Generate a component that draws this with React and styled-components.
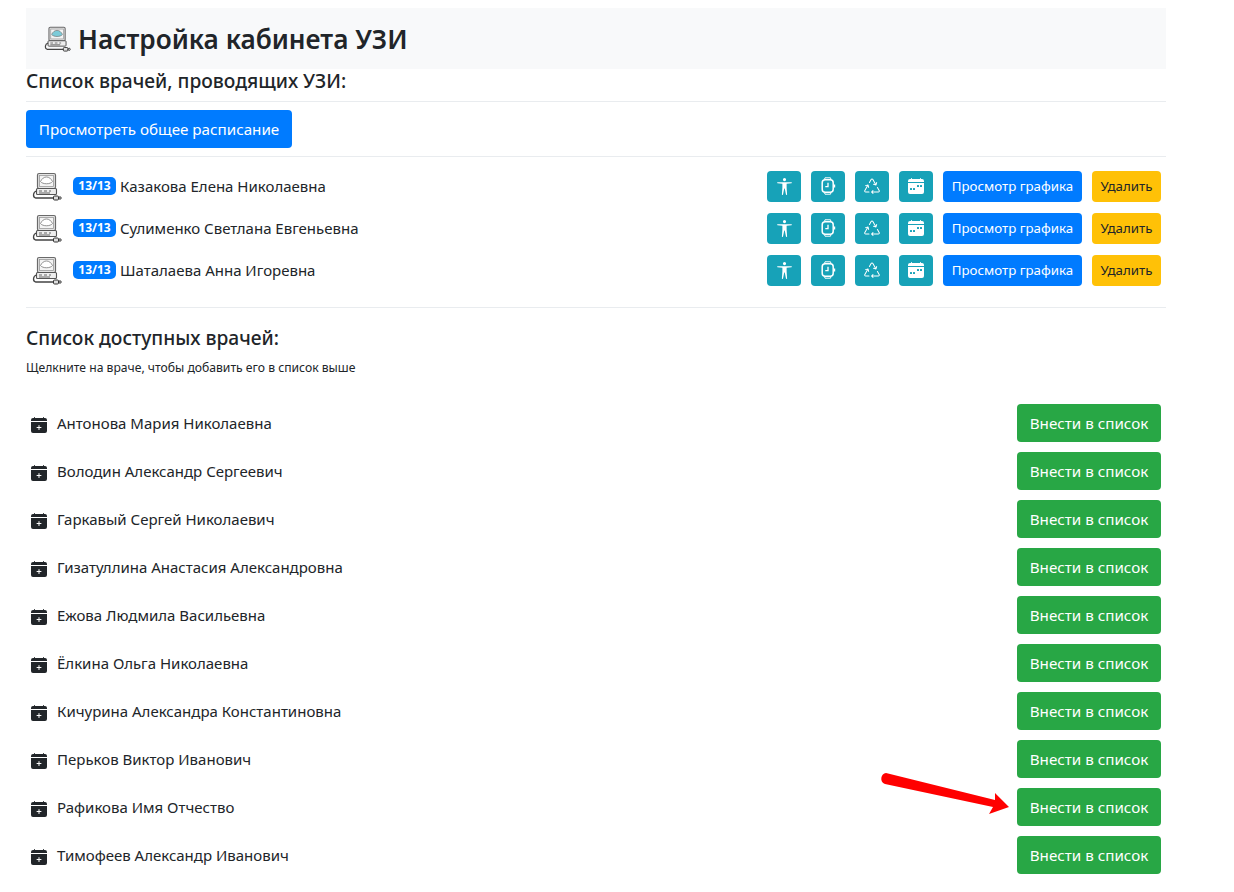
import React from "react";
import styled, { createGlobalStyle } from "styled-components";
import {
  BsUniversalAccess,
  BsRecycle,
  BsCalendarWeekFill,
  BsCalendarPlusFill,
} from "react-icons/bs";

const Global = createGlobalStyle`
  html, body { margin: 0; padding: 0; background: #fff; }
  body { font-family: "Noto Sans", "Open Sans", sans-serif; font-size: 15px; line-height: 24px; color: #212529; }
  * { box-sizing: border-box; }
`;

const Page = styled.div`
  position: relative;
  width: 1234px;
  height: 892px;
  overflow: hidden;
  padding: 8px 0 0 26px;
`;
const Container = styled.div`
  width: 1140px;
`;
const Banner = styled.header`
  height: 61px;
  background: #f8f9fa;
  display: flex;
  align-items: center;
  padding-left: 18px;
  gap: 7px;
`;
const Title = styled.h1`
  margin: 0;
  font-size: 26.2px;
  font-weight: 600;
  line-height: 36px;
`;
const SubTitle = styled.h2`
  margin: 0;
  padding-bottom: 3px;
  font-size: 19.2px;
  font-weight: 500;
  line-height: 24px;
`;
const Rule = styled.hr`
  margin: ${(p) => p.$m || "0"};
  border: 0;
  border-top: 1px solid #e9ecef;
`;
const Button = styled.button`
  border: 0;
  font-family: inherit;
  color: #fff;
  background: ${(p) => p.$bg || "#007bff"};
  border-radius: 4px;
  padding: 0;
  display: inline-flex;
  align-items: center;
  justify-content: center;
`;
const MainButton = styled(Button)`
  display: flex;
  width: 266px;
  height: 38px;
  font-size: 15.2px;
`;
const DoctorRow = styled.div`
  height: 42px;
  display: flex;
  align-items: center;
  padding: 0 5px 0 6px;
`;
const DoctorRows = styled.div`
  padding-top: 8px;
  padding-bottom: 16px;
`;
const Badge = styled.span`
  width: 43px;
  height: 18px;
  margin: 0 4px 0 11px;
  border-radius: 5px;
  background: #007bff;
  color: #fff;
  font-size: 12px;
  font-weight: 700;
  line-height: 18px;
  text-align: center;
`;
const Name = styled.span`
  font-size: 15px;
  color: #212529;
`;
const Spacer = styled.div`
  flex: 1;
`;
const Actions = styled.div`
  display: flex;
  align-items: center;
  gap: 10px;
`;
const IconButton = styled(Button)`
  width: 34px;
  height: 31px;
  background: #17a2b8;
  font-size: ${(p) => p.$s || 16}px;
`;
const SmallButton = styled(Button)`
  height: 31px;
  font-size: 13.3px;
  width: ${(p) => p.$w}px;
  color: ${(p) => p.$fg || "#fff"};
`;
const Hint = styled.p`
  margin: 6px 0 0;
  font-size: 12.16px;
  line-height: 18px;
`;
const Available = styled.div`
  padding-top: 18px;
`;
const AvailableList = styled.div`
  margin-top: 27px;
  display: flex;
  flex-direction: column;
  gap: 10px;
`;
const AvailableRow = styled.div`
  height: 38px;
  display: flex;
  align-items: center;
  padding: 0 5px;
  color: #212529;
`;
const RowIcon = styled(BsCalendarPlusFill)`
  font-size: 16px;
  margin-right: 10px;
  position: relative;
  top: 2px;
`;
const AddButton = styled(Button)`
  width: 144px;
  height: 38px;
  background: #28a745;
  font-size: 15.2px;
`;
const Arrow = styled.svg`
  position: absolute;
  left: 876px;
  top: 766px;
`;

function Computer({ size = 30, screen = "#fff" }) {
  return (
    <svg width={size} height={size} viewBox="0 0 30 30" fill="none">
      <rect x="5.500" y="2.500" width="18" height="15" rx="1.500" fill="#e4e4e4" stroke="#6a6a6a" strokeWidth="1.200" />
      <rect x="7.500" y="4.500" width="14" height="11" fill="#f4f4f4" stroke="#9a9a9a" strokeWidth=".8" />
      <path d="M8.500 10.500 C10 7.500 12 6 14.500 6 C17 6 19 7.500 20.500 10.500 C18.500 13.500 10.500 13.500 8.500 10.500Z" fill={screen} stroke="#777" strokeWidth=".8" />
      <rect x="4.500" y="17.500" width="20" height="6" rx="1" fill="#eee" stroke="#555" strokeWidth="1.100" />
      <path d="M7 20h3M12 20h3M17 20h2M7 22h11" stroke="#666" strokeWidth="1" />
      <path d="M4.500 20 C1 21 .5 26 3.500 27 L22 27" stroke="#444" strokeWidth="1.300" />
      <rect x="21.500" y="25" width="5" height="4" rx="1" fill="#ddd" stroke="#333" />
      <circle cx="28" cy="27" r="1.200" stroke="#333" />
    </svg>
  );
}

function WatchIcon() {
  return (
    <svg width="16" height="18" viewBox="0 0 16 18" fill="none" stroke="#fff">
      <rect x="2.200" y="2.800" width="11" height="12.400" rx="3" strokeWidth="1.500" />
      <path d="M4.500 2.500 L5 .8 H10.500 L11 2.500 M4.500 15.500 L5 17.200 H10.500 L11 15.500" strokeWidth="1" />
      <path d="M8 5.800 V9.700 H5.300" strokeWidth="1.300" />
      <path d="M14.500 7.500 V10.500" strokeWidth="1.400" />
    </svg>
  );
}

const assigned = ["Казакова Елена Николаевна", "Сулименко Светлана Евгеньевна", "Шаталаева Анна Игоревна"];
const available = [
  "Антонова Мария Николаевна",
  "Володин Александр Сергеевич",
  "Гаркавый Сергей Николаевич",
  "Гизатуллина Анастасия Александровна",
  "Ежова Людмила Васильевна",
  "Ёлкина Ольга Николаевна",
  "Кичурина Александра Константиновна",
  "Перьков Виктор Иванович",
  "Рафикова Имя Отчество",
  "Тимофеев Александр Иванович",
];

export default function App() {
  return (
    <Page>
      <Global />
      <Container>
        <Banner>
          <Computer size={27} screen="#7ccbd8" />
          <Title>Настройка кабинета УЗИ</Title>
        </Banner>
        <SubTitle>Список врачей, проводящих УЗИ:</SubTitle>
        <Rule $m="5px 0 8px" />
        <MainButton>Просмотреть общее расписание</MainButton>
        <Rule $m="8px 0 0" />
        <DoctorRows>
          {assigned.map((n) => (
            <DoctorRow key={n}>
              <Computer />
              <Badge>13/13</Badge>
              <Name>{n}</Name>
              <Spacer />
              <Actions>
                <IconButton $s={17}><BsUniversalAccess /></IconButton>
                <IconButton><WatchIcon /></IconButton>
                <IconButton><BsRecycle /></IconButton>
                <IconButton><BsCalendarWeekFill /></IconButton>
                <SmallButton $w={139}>Просмотр графика</SmallButton>
                <SmallButton $w={69} $bg="#ffc107" $fg="#212529">Удалить</SmallButton>
              </Actions>
            </DoctorRow>
          ))}
        </DoctorRows>
        <Rule />
        <Available>
          <SubTitle>Список доступных врачей:</SubTitle>
          <Hint>Щелкните на враче, чтобы добавить его в список выше</Hint>
          <AvailableList>
            {available.map((n) => (
              <AvailableRow key={n}>
                <RowIcon />
                <Name>{n}</Name>
                <Spacer />
                <AddButton>Внести в список</AddButton>
              </AvailableRow>
            ))}
          </AvailableList>
        </Available>
      </Container>
      <Arrow width="140" height="56" viewBox="0 0 140 56">
        <path d="M10 7 C5 7 3 16 9 18 L117 41 L113 48 L133 41 L119 27 L119 34 Z" fill="#ff0000" />
      </Arrow>
    </Page>
  );
}
